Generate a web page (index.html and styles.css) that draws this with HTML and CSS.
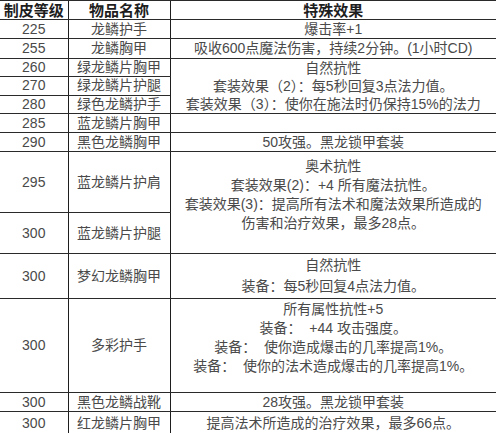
FILE: index.html
```html
<!DOCTYPE html>
<html lang="zh">
<head>
<meta charset="utf-8">
<link rel="stylesheet" href="styles.css">
</head>
<body>
<table class="sheet">
  <colgroup>
    <col class="c1">
    <col class="c2">
    <col class="c3">
  </colgroup>
  <tr class="h19 head">
    <td>制皮等级</td><td>物品名称</td><td>特殊效果</td>
  </tr>
  <tr class="h19">
    <td>225</td><td>龙鳞护手</td><td>爆击率+1</td>
  </tr>
  <tr class="h20">
    <td>255</td><td>龙鳞胸甲</td><td>吸收600点魔法伤害，持续2分钟。(1小时CD)</td>
  </tr>
  <tr class="h18">
    <td>260</td><td>绿龙鳞片胸甲</td>
    <td rowspan="3" class="multi lh18">自然抗性<br>套装效果（2）：每5秒回复3点法力值。<br>套装效果（3）：使你在施法时仍保持15%的法力</td>
  </tr>
  <tr class="h18">
    <td>270</td><td>绿龙鳞片护腿</td>
  </tr>
  <tr class="h18">
    <td>280</td><td>绿色龙鳞护手</td>
  </tr>
  <tr class="h19">
    <td>285</td><td>蓝龙鳞片胸甲</td><td></td>
  </tr>
  <tr class="h19">
    <td>290</td><td>黑色龙鳞胸甲</td><td>50攻强。黑龙锁甲套装</td>
  </tr>
  <tr class="h61">
    <td>295</td><td>蓝龙鳞片护肩</td>
    <td rowspan="2" class="multi top lh19 pt5">奥术抗性<br>套装效果(2)：+4 所有魔法抗性。<br>套装效果(3)：提高所有法术和魔法效果所造成的<br>伤害和治疗效果，最多28点。</td>
  </tr>
  <tr class="h41">
    <td>300</td><td>蓝龙鳞片护腿</td>
  </tr>
  <tr class="h45">
    <td>300</td><td>梦幻龙鳞胸甲</td>
    <td class="multi lh21">自然抗性<br>装备：每5秒回复4点法力值。</td>
  </tr>
  <tr class="h94">
    <td>300</td><td>多彩护手</td>
    <td class="multi top lh19 pt1">所有属性抗性+5<br>装备：&nbsp;&nbsp;+44 攻击强度。<br>装备：&nbsp;&nbsp;使你造成爆击的几率提高1%。<br>装备：&nbsp;&nbsp;使你的法术造成爆击的几率提高1%。</td>
  </tr>
  <tr class="h19">
    <td>300</td><td>黑色龙鳞战靴</td><td>28攻强。黑龙锁甲套装</td>
  </tr>
  <tr class="h23">
    <td>300</td><td>红龙鳞片胸甲</td><td>提高法术所造成的治疗效果，最多66点。</td>
  </tr>
</table>
</body>
</html>
```
FILE: styles.css
```css
html, body {
  margin: 0;
  padding: 0;
  background: #ffffff;
}

.sheet {
  border-collapse: collapse;
  table-layout: fixed;
  width: 496px;
  font-family: "Liberation Sans", "Noto Sans CJK SC", sans-serif;
  font-size: 14px;
  color: #4a4a4a;
}

.c1 { width: 68px; }
.c2 { width: 102px; }
.c3 { width: 326px; }

.sheet td {
  padding: 0;
  border-top: 1px solid #2a2a2a;
  border-bottom: 1px solid #2a2a2a;
  text-align: center;
  vertical-align: middle;
  white-space: nowrap;
  line-height: 17px;
  overflow: visible;
}

.sheet td + td {
  border-left: 1px solid #1e1e1e;
}

.head td {
  font-size: 15px;
  font-weight: bold;
  color: #1e1e1e;
}

.h18 { height: 18px; }
.h19 { height: 19px; }
.h20 { height: 20px; }
.h23 { height: 23px; }
.h41 { height: 41px; }
.h45 { height: 45px; }
.h61 { height: 61px; }
.h94 { height: 94px; }

.sheet td.top { vertical-align: top; }
.sheet td.lh18 { line-height: 18px; }
.sheet td.lh19 { line-height: 19px; }
.sheet td.lh21 { line-height: 21px; }
.sheet td.pt5 { padding-top: 5px; }
.sheet td.pt1 { padding-top: 1px; }
```
